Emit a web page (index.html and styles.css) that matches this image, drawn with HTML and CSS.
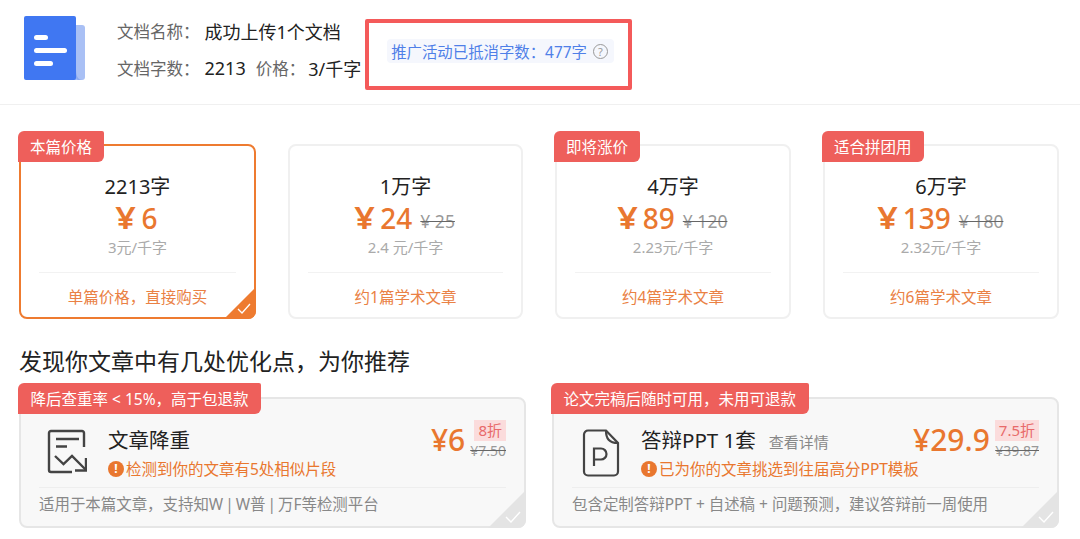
FILE: index.html
```html
<!DOCTYPE html>
<html lang="zh-CN">
<head>
    <meta charset="UTF-8">
    <title>文档价格</title>
    <link rel="stylesheet" href="styles.css">
</head>
<body>
    <header class="doc-header">
        <svg class="doc-icon" width="62" height="64" viewBox="0 0 62 64">
            <path d="M48 9h10a3 3 0 0 1 3 3v49a3 3 0 0 1-3 3H48z" fill="#a9c0f5"/>
            <rect x="0" y="0" width="52" height="64" rx="2" fill="#4077f2"/>
            <path d="M52 54v7a3 3 0 0 0 3 3h3c-3 0-6-3-6-10z" fill="#8aa9f0"/>
            <rect x="10" y="19" width="14" height="5" rx="2.5" fill="#fff"/>
            <rect x="10" y="32" width="33" height="5" rx="2.5" fill="#fff"/>
            <rect x="10" y="45" width="19" height="5" rx="2.5" fill="#fff"/>
        </svg>
        <div class="doc-info">
            <div class="doc-row"><span class="label">文档名称&#xFF1A;</span><span class="value">成功上传1个文档</span></div>
            <div class="doc-row"><span class="label">文档字数&#xFF1A;</span><span class="value">2213</span><span class="label price-label">价格&#xFF1A;</span><span class="value">3/千字</span></div>
        </div>
        <div class="promo-box">
            <div class="promo-chip">
                推广活动已抵消字数&#xFF1A;477字
                <span class="help">?</span>
            </div>
        </div>
    </header>

    <main class="content">
        <section class="price-grid">
            <div class="price-card selected">
                <span class="tag">本篇价格</span>
                <div class="card-body">
                    <div class="count">2213字</div>
                    <div class="price"><b><span class="yen">¥</span>6</b></div>
                    <div class="unit">3元/千字</div>
                </div>
                <div class="card-foot">单篇价格&#xFF0C;直接购买</div>
                <span class="corner"><svg width="14" height="11" viewBox="0 0 14 11"><path d="M1 6l4 4 8-9" fill="none" stroke="#fff" stroke-width="1.3"/></svg></span>
            </div>
            <div class="price-card">
                <div class="card-body">
                    <div class="count">1万字</div>
                    <div class="price"><b><span class="yen">¥</span>24</b><s>¥ 25</s></div>
                    <div class="unit">2.4 元/千字</div>
                </div>
                <div class="card-foot">约1篇学术文章</div>
            </div>
            <div class="price-card">
                <span class="tag">即将涨价</span>
                <div class="card-body">
                    <div class="count">4万字</div>
                    <div class="price"><b><span class="yen">¥</span>89</b><s>¥ 120</s></div>
                    <div class="unit">2.23元/千字</div>
                </div>
                <div class="card-foot">约4篇学术文章</div>
            </div>
            <div class="price-card">
                <span class="tag">适合拼团用</span>
                <div class="card-body">
                    <div class="count">6万字</div>
                    <div class="price"><b><span class="yen">¥</span>139</b><s>¥ 180</s></div>
                    <div class="unit">2.32元/千字</div>
                </div>
                <div class="card-foot">约6篇学术文章</div>
            </div>
        </section>

        <h2 class="section-title">发现你文章中有几处优化点&#xFF0C;为你推荐</h2>

        <section class="service-grid">
            <div class="service-card">
                <span class="tag">降后查重率 &lt; 15%&#xFF0C;高于包退款</span>
                <div class="service-main">
                    <svg class="service-icon" width="40" height="46" viewBox="0 0 40 46" fill="none" stroke="#444" stroke-width="2.4">
                        <path d="M37 18V4a2 2 0 0 0-2-2H4a2 2 0 0 0-2 2v37a2 2 0 0 0 2 2h21"/>
                        <path d="M9 10h23M9 17.500h11"/>
                        <path d="M8 27l8.500 8 8.500-8 14 14"/>
                        <path d="M39 29v12.500H28"/>
                    </svg>
                    <div class="service-text">
                        <div class="service-name">文章降重</div>
                        <div class="service-note"><span class="alert">!</span>检测到你的文章有5处相似片段</div>
                    </div>
                    <div class="service-price">
                        <b>¥6</b>
                        <div class="discount">
                            <span class="off">8折</span>
                            <s>¥7.50</s>
                        </div>
                    </div>
                </div>
                <div class="service-foot tight">适用于本篇文章&#xFF0C;支持知W | W普 | 万F等检测平台</div>
                <span class="corner gray"><svg width="16" height="12" viewBox="0 0 16 12"><path d="M1 6l5 5 9-10" fill="none" stroke="#fff" stroke-width="1.4"/></svg></span>
            </div>
            <div class="service-card">
                <span class="tag">论文完稿后随时可用&#xFF0C;未用可退款</span>
                <div class="service-main">
                    <svg class="service-icon" width="40" height="48" viewBox="-2 0 40 48" fill="none" stroke="#444" stroke-width="2.200">
                        <path d="M24 1.500H6a4 4 0 0 0-4 4v37a4 4 0 0 0 4 4h26a4 4 0 0 0 4-4V14z"/>
                        <path d="M24 1.500c0 8 3 12.500 12 12.500"/>
                        <path d="M12 37V19.500h7a5.500 5.500 0 0 1 0 11h-7"/>
                    </svg>
                    <div class="service-text">
                        <div class="service-name">答辩PPT 1套<span class="detail">查看详情</span></div>
                        <div class="service-note"><span class="alert">!</span>已为你的文章挑选到往届高分PPT模板</div>
                    </div>
                    <div class="service-price">
                        <b>¥29.9</b>
                        <div class="discount">
                            <span class="off">7.5折</span>
                            <s>¥39.87</s>
                        </div>
                    </div>
                </div>
                <div class="service-foot">包含定制答辩PPT + 自述稿 + 问题预测&#xFF0C;建议答辩前一周使用</div>
                <span class="corner gray"><svg width="16" height="12" viewBox="0 0 16 12"><path d="M1 6l5 5 9-10" fill="none" stroke="#fff" stroke-width="1.4"/></svg></span>
            </div>
        </section>
    </main>
</body>
</html>
```

FILE: styles.css
```css
* {
    box-sizing: border-box;
}

body {
    margin: 0;
    background: #fff;
    color: #222;
    font-family: "Noto Sans", "Noto Sans CJK SC", sans-serif;
    overflow: hidden;
}

.doc-header {
    height: 105px;
    padding: 16px 0 0 24px;
    display: flex;
    align-items: flex-start;
    border-bottom: 1px solid #f0f0f0;
}

.doc-info {
    margin: -4px 0 0 31px;
}

.doc-row {
    height: 37px;
    display: flex;
    align-items: center;
    white-space: nowrap;
}

.doc-row .label {
    color: #666;
    font-size: 16.5px;
    margin-right: 5px;
}

.doc-row .value {
    color: #222;
    font-size: 18px;
}

.doc-row .price-label {
    margin-left: 10px;
    margin-right: 3px;
}

.promo-box {
    flex: none;
    margin: 3px 0 0 4px;
    width: 267px;
    height: 71px;
    border: 4px solid #f45a5a;
    border-radius: 2px;
    padding: 16px 0 0 18px;
}

.promo-chip {
    width: 227px;
    height: 24px;
    padding-left: 4px;
    display: flex;
    align-items: center;
    gap: 6px;
    background: #f5f7fd;
    border-radius: 4px;
    color: #4f7fe8;
    font-size: 15.400px;
    white-space: nowrap;
}

.help {
    flex: none;
    width: 15px;
    height: 15px;
    border: 1px solid #999;
    border-radius: 50%;
    color: #999;
    font-size: 11px;
    line-height: 13px;
    text-align: center;
}

.content {
    padding: 39px 21px 0 19px;
}

.price-grid {
    display: grid;
    grid-template-columns: 237px 235px 236px 236px;
    gap: 32px;
}

.price-card {
    position: relative;
    height: 175px;
    border: 2px solid #f0f0f0;
    border-radius: 8px;
    text-align: center;
}

.price-card.selected {
    border-color: #ee7b30;
}

.tag {
    position: absolute;
    left: -3px;
    top: -15px;
    height: 31px;
    padding: 0 12px;
    display: flex;
    align-items: center;
    background: #ee5f5b;
    color: #fff;
    font-size: 15.500px;
    white-space: nowrap;
    border-radius: 6px 2px 6px 0;
}

.card-body {
    height: 127px;
    margin: 0 18px;
    padding-top: 28px;
    border-bottom: 1px solid #f2f2f2;
}

.count {
    font-size: 20px;
    line-height: 26px;
    color: #222;
}

.price {
    height: 36px;
    display: flex;
    align-items: center;
    justify-content: center;
    gap: 8px;
    white-space: nowrap;
}

.price b {
    font-size: 28px;
    line-height: 36px;
    font-weight: 500;
    color: #e9772f;
}

.yen {
    display: inline-block;
    font-size: 30px;
    font-weight: 600;
    line-height: 1;
    margin-right: 7px;
    transform: scaleX(1.2);
}

.price s {
    font-size: 17.500px;
    color: #999;
    text-decoration-color: #666;
    margin-top: 5px;
}

.unit {
    font-size: 15px;
    line-height: 22px;
    color: #aaa;
}

.card-foot {
    padding-top: 12px;
    font-size: 15.500px;
    line-height: 24px;
    color: #ea8144;
}

.corner {
    position: absolute;
    right: -2px;
    bottom: -2px;
    width: 32px;
    height: 32px;
    background: #ee7b30;
    clip-path: polygon(100% 0, 100% 100%, 0 100%);
    border-bottom-right-radius: 8px;
}

.corner svg {
    position: absolute;
    right: 5px;
    bottom: 5px;
}

.corner.gray {
    width: 38px;
    height: 38px;
    background: #e4e4e4;
}

.section-title {
    margin: 27px 0 0;
    height: 51px;
    font-size: 23px;
    line-height: 30px;
    font-weight: 400;
    color: #222;
}

.service-grid {
    display: grid;
    grid-template-columns: 507px 507px;
    gap: 26px;
}

.service-card {
    position: relative;
    height: 131px;
    background: #f8f8f8;
    border: 2px solid #e6e6e6;
    border-radius: 8px;
}

.service-card .tag {
    top: -16px;
    padding: 0 12.500px;
}

.service-main {
    height: 89px;
    margin: 0 18px;
    padding: 28px 0 0 8px;
    display: flex;
    align-items: flex-start;
    border-bottom: 1px solid #eee;
}

.service-icon {
    flex: none;
    margin-top: 2px;
}

.service-text {
    margin-left: 21px;
    flex: 1;
    min-width: 0;
}

.service-name {
    height: 26px;
    font-size: 20.500px;
    line-height: 26px;
    color: #222;
    white-space: nowrap;
}

.detail {
    margin-left: 13px;
    font-size: 15px;
    color: #888;
}

.service-note {
    margin-top: 5px;
    display: flex;
    align-items: center;
    gap: 2px;
    font-size: 15.500px;
    line-height: 22px;
    color: #e9772f;
    white-space: nowrap;
}

.alert {
    flex: none;
    width: 16px;
    height: 16px;
    border-radius: 50%;
    background: #e9772f;
    color: #fff;
    font-size: 12px;
    font-weight: 700;
    line-height: 16px;
    text-align: center;
}

.service-price {
    margin-top: -8px;
    display: flex;
    align-items: center;
    gap: 5px;
    white-space: nowrap;
}

.service-price b {
    font-size: 30px;
    font-weight: 500;
    color: #e9772f;
}

.discount {
    display: flex;
    flex-direction: column;
    align-items: flex-end;
}

.off {
    height: 21px;
    padding: 0 4px;
    background: #fbdcdc;
    color: #e86a6a;
    font-size: 15px;
    line-height: 21px;
}

.discount s {
    font-size: 14px;
    line-height: 19px;
    color: #999;
    text-decoration-color: #666;
}

.service-foot {
    padding-left: 18px;
    margin-top: 4px;
    font-size: 15.450px;
    line-height: 24px;
    color: #888;
    white-space: nowrap;
}

.service-foot.tight {
    word-spacing: -2px;
}
```
